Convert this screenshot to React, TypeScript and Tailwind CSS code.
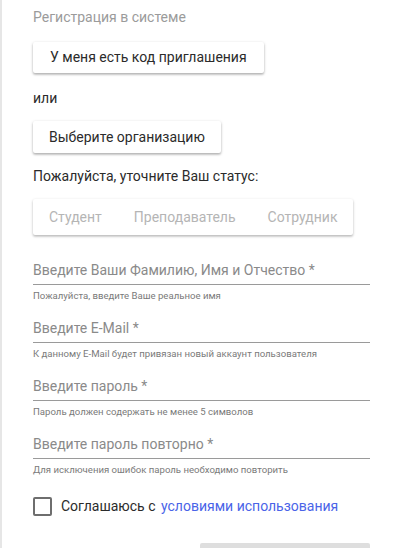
import React from "react";

const font = { fontFamily: "Roboto, 'Noto Sans', Arial, sans-serif" };

function Field({ label, helper, first }: { label: string; helper: string; first?: boolean }) {
  return (
    <div className={first ? "" : "mt-[16px]"}>
      <div className="text-[14px] leading-[20px] text-[#8a8a8a] pb-[4px] border-b border-[#9a9a9a]">{label}</div>
      <div className="mt-[5px] text-[9.6px] leading-[12px] text-[#7a7a7a]">{helper}</div>
    </div>
  );
}

export default function App() {
  return (
    <div style={font} className="w-[400px] h-[548px] overflow-hidden bg-white border-l-2 border-[#e6e6e6]">
      <div className="pl-[31px] pr-[30px] pt-[7px] flex flex-col items-stretch">
        <div className="text-[14px] leading-[20px] text-[#9b9b9b]">Регистрация в системе</div>
        <div className="mt-[15px]">
          <button className="h-[31px] px-[17px] bg-white rounded-[2px] text-[14px] text-[#2b2b2b] shadow-[0_1px_3px_rgba(0,0,0,0.25),0_2px_2px_rgba(0,0,0,0.12)]">
            У меня есть код приглашения
          </button>
        </div>
        <div className="mt-[15px] text-[14px] leading-[20px] text-[#2b2b2b]">или</div>
        <div className="mt-[13px]">
          <button className="h-[32px] px-[16px] bg-white rounded-[2px] text-[14px] text-[#2b2b2b] shadow-[0_1px_3px_rgba(0,0,0,0.25),0_2px_2px_rgba(0,0,0,0.12)]">
            Выберите организацию
          </button>
        </div>
        <div className="mt-[13px] text-[14px] leading-[20px] text-[#2b2b2b]">Пожалуйста, уточните Ваш статус:</div>
        <div className="mt-[13px] self-start flex h-[36px] bg-white rounded-[2px] shadow-[0_1px_3px_rgba(0,0,0,0.22),0_2px_2px_rgba(0,0,0,0.1)]">
          <div className="px-[16px] flex items-center text-[14px] text-[#b5b5b5]">Студент</div>
          <div className="px-[16px] flex items-center text-[14px] text-[#b5b5b5]">Преподаватель</div>
          <div className="px-[16px] flex items-center text-[14px] text-[#b5b5b5]">Сотрудник</div>
        </div>
        <div className="mt-[25px]">
          <Field first label="Введите Ваши Фамилию, Имя и Отчество *" helper="Пожалуйста, введите Ваше реальное имя" />
          <Field label="Введите E-Mail *" helper="К данному E-Mail будет привязан новый аккаунт пользователя" />
          <Field label="Введите пароль *" helper="Пароль должен содержать не менее 5 символов" />
          <Field label="Введите пароль повторно *" helper="Для исключения ошибок пароль необходимо повторить" />
        </div>
        <div className="mt-[20px] flex items-center">
          <div className="w-[19px] h-[19px] border-2 border-[#6e6e6e] rounded-[2px]" />
          <div className="ml-[9px] text-[14px] leading-[20px] text-[#2b2b2b]">
            Соглашаюсь с <span className="ml-[2px] text-[#4a64e8]">условиями использования</span>
          </div>
        </div>
        <div className="mt-[27px] flex justify-end">
          <div className="w-[170px] h-[36px] bg-[#dedede] rounded-[2px]" />
        </div>
      </div>
    </div>
  );
}
